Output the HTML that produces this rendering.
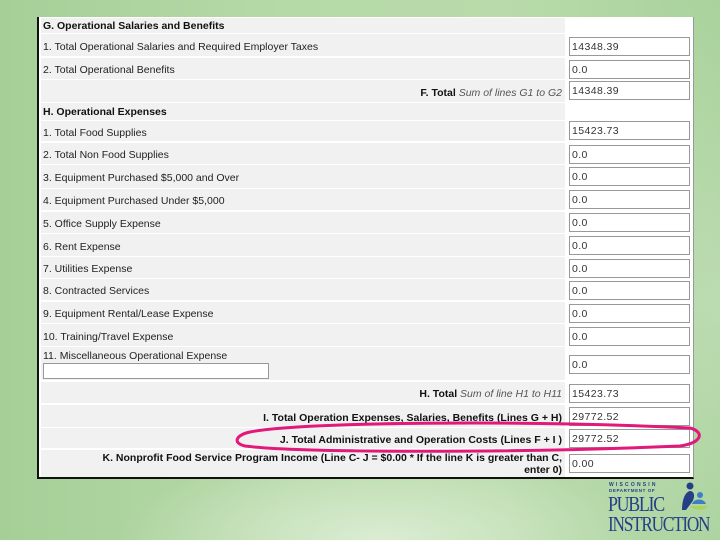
<!DOCTYPE html>
<html><head><meta charset="utf-8"><style>
*{margin:0;padding:0;box-sizing:border-box}
body{width:720px;height:540px;overflow:hidden;position:relative;font-family:"Liberation Sans","DejaVu Sans",sans-serif;
background:
radial-gradient(ellipse 260px 90px at 380px 540px, rgba(225,240,218,0.85), rgba(225,240,218,0) 100%),
radial-gradient(ellipse 260px 300px at 720px 300px, rgba(200,225,190,0.6), rgba(200,225,190,0) 100%),
linear-gradient(90deg,#a6cf97 0%,#b6d9a8 40%,#b9dbab 70%,#a9d29c 100%);}
#panel{position:absolute;left:37px;top:17px;width:657px;height:462px;background:#fff;border-left:2px solid #111;border-bottom:2px solid #111;border-right:1px solid #999}
.c{position:absolute;left:2px;width:524px;background:#f1f1f1;font-size:10.5px;color:#222;padding-left:2px;padding-top:2px;white-space:nowrap}
.r{text-align:right;padding-right:3px}
.in{position:absolute;left:530px;width:121px;height:19px;border:1px solid #999;background:#fff;font-size:10.5px;color:#333;padding:3px 0 0 2px;font-family:"Liberation Sans","DejaVu Sans",sans-serif;letter-spacing:0.4px}
b{font-weight:bold;color:#111}
i{color:#555}
#logo{position:absolute;left:608px;top:482px;width:106px;height:56px;color:#243f86}
</style></head><body>
<div id="panel">
<div class="c" style="top:1px;height:15px;line-height:13px"><b>G. Operational Salaries and Benefits</b></div>
<div class="c" style="top:17px;height:22px;line-height:22px">1. Total Operational Salaries and Required Employer Taxes</div><div class="in" style="top:20px">14348.39</div>
<div class="c" style="top:41px;height:21px;line-height:21px">2. Total Operational Benefits</div><div class="in" style="top:43px">0.0</div>
<div class="c r" style="top:63px;height:22px;line-height:22px"><b>F. Total</b> <i>Sum of lines G1 to G2</i></div><div class="in" style="top:64px">14348.39</div>
<div class="c" style="top:86px;height:17px;line-height:15px"><b>H. Operational Expenses</b></div>
<div class="c" style="top:104px;height:20px;line-height:20px">1. Total Food Supplies</div><div class="in" style="top:104px">15423.73</div>
<div class="c" style="top:126px;height:21px;line-height:21px">2. Total Non Food Supplies</div><div class="in" style="top:128px">0.0</div>
<div class="c" style="top:148px;height:23px;line-height:23px">3. Equipment Purchased $5,000 and Over</div><div class="in" style="top:150px">0.0</div>
<div class="c" style="top:172px;height:21px;line-height:21px">4. Equipment Purchased Under $5,000</div><div class="in" style="top:173px">0.0</div>
<div class="c" style="top:195px;height:21px;line-height:21px">5. Office Supply Expense</div><div class="in" style="top:196px">0.0</div>
<div class="c" style="top:217px;height:22px;line-height:22px">6. Rent Expense</div><div class="in" style="top:219px">0.0</div>
<div class="c" style="top:240px;height:21px;line-height:21px">7. Utilities Expense</div><div class="in" style="top:242px">0.0</div>
<div class="c" style="top:262px;height:21px;line-height:21px">8. Contracted Services</div><div class="in" style="top:264px">0.0</div>
<div class="c" style="top:285px;height:21px;line-height:21px">9. Equipment Rental/Lease Expense</div><div class="in" style="top:287px">0.0</div>
<div class="c" style="top:307px;height:22px;line-height:22px">10. Training/Travel Expense</div><div class="in" style="top:310px">0.0</div>
<div class="c" style="top:330px;height:33px;line-height:14px">11. Miscellaneous Operational Expense<div style="position:absolute;left:2px;top:16px;width:226px;height:16px;border:1px solid #999;background:#fff"></div></div><div class="in" style="top:338px">0.0</div>
<div class="c r" style="top:365px;height:21px;line-height:21px"><b>H. Total</b> <i>Sum of line H1 to H11</i></div><div class="in" style="top:367px">15423.73</div>
<div class="c r" style="top:388px;height:22px;line-height:22px"><b>I. Total Operation Expenses, Salaries, Benefits (Lines G + H)</b></div><div class="in" style="top:390px">29772.52</div>
<div class="c r" style="top:411px;height:20px;line-height:20px"><b>J. Total Administrative and Operation Costs (Lines F + I )</b></div><div class="in" style="top:412px">29772.52</div>
<div class="c r" style="top:433px;height:27px;line-height:12px;padding-top:2px"><b>K. Nonprofit Food Service Program Income (Line C- J = $0.00 * If the line K is greater than C,<br>enter 0)</b></div><div class="in" style="top:437px">0.00</div>
</div>
<svg style="position:absolute;left:0;top:0" width="720" height="540"><path d="M250 432 C300 422,520 420,690 428 C705 432,702 443,680 446 C520 453,300 453,245 446 C232 443,236 435,250 432Z" fill="none" stroke="#e2187a" stroke-width="3"/></svg>
<div id="logo">
<div style="position:absolute;left:1px;top:0;font-size:5px;font-weight:bold;letter-spacing:2.2px">WISCONSIN</div>
<div style="position:absolute;left:1px;top:6px;font-size:4.5px;font-weight:bold;letter-spacing:0.6px">DEPARTMENT OF</div>
<div style="position:absolute;left:0;top:10px;font-family:'Liberation Serif',serif;font-size:21px;letter-spacing:-1.5px;transform:scaleX(0.85);transform-origin:left">PUBLIC</div>
<div style="position:absolute;left:0;top:30px;font-family:'Liberation Serif',serif;font-size:21px;letter-spacing:-1.5px;transform:scaleX(0.82);transform-origin:left">INSTRUCTION</div>
<svg style="position:absolute;left:60px;top:0" width="46" height="32"><circle cx="22" cy="4" r="3.5" fill="#243f86"/><path d="M14 28 C14 18,17 10,22 9 C27 9,27 16,24 20 L18 28Z" fill="#243f86"/><circle cx="32" cy="13" r="3" fill="#3e7fc4"/><path d="M24 22 C26 16,36 16,38 22Z" fill="#3e7fc4"/><path d="M22 24 L40 24 C38 29,26 29,22 24Z" fill="#a8d460"/></svg>
</div>
</body></html>
